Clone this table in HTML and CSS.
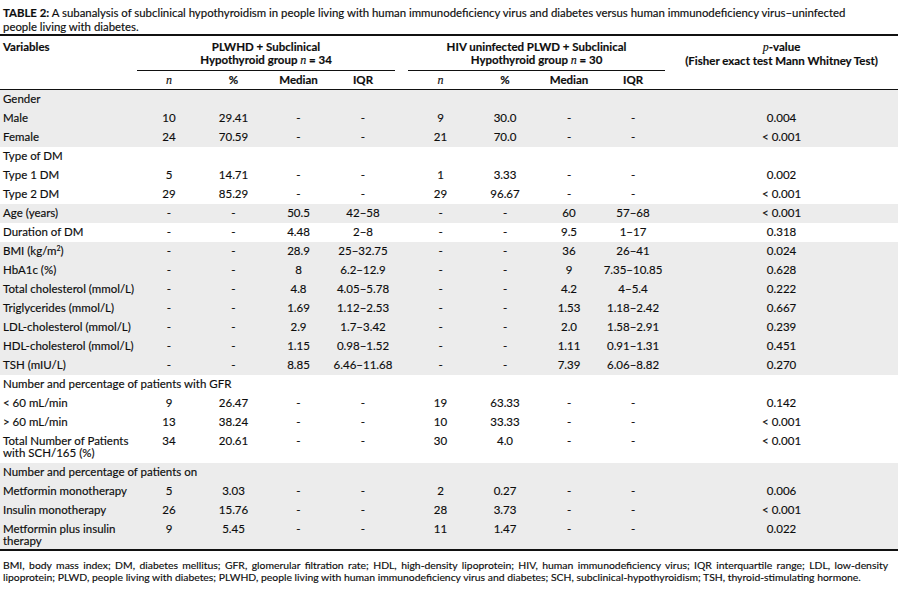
FILE: index.html
```html
<!DOCTYPE html>
<html>
<head>
<meta charset="utf-8">
<link rel="stylesheet" href="styles.css">
</head>
<body>
<div class="page">
  <p class="title"><b>TABLE 2:</b> A subanalysis of subclinical hypothyroidism in people living with human immunodeficiency virus and diabetes versus human immunodeficiency virus–uninfected<br>people living with diabetes.</p>
  <table class="tbl">
    <colgroup>
      <col style="width:137px"><col style="width:64px"><col style="width:65px"><col style="width:65px"><col style="width:64px">
      <col style="width:13px">
      <col style="width:65px"><col style="width:64px"><col style="width:64px"><col style="width:64px">
      <col style="width:233px">
    </colgroup>
    <thead>
      <tr class="h1">
        <th class="var">Variables</th>
        <th class="grp" colspan="4">PLWHD + Subclinical<br>Hypothyroid group <i class="it">n</i> = 34</th>
        <th class="sp"></th>
        <th class="grp" colspan="4">HIV uninfected PLWD + Subclinical<br>Hypothyroid group <i class="it">n</i> = 30</th>
        <th class="pv"><i class="it">p</i>-value<br>(Fisher exact test Mann Whitney Test)</th>
      </tr>
      <tr class="h2">
        <th></th>
        <th><i class="it">n</i></th><th>%</th><th>Median</th><th>IQR</th>
        <th></th>
        <th><i class="it">n</i></th><th>%</th><th>Median</th><th>IQR</th>
        <th></th>
      </tr>
    </thead>
    <tbody>
      <tr class="g"><td colspan="11">Gender</td></tr>
      <tr class="g"><td>Male</td><td>10</td><td>29.41</td><td>-</td><td>-</td><td></td><td>9</td><td>30.0</td><td>-</td><td>-</td><td>0.004</td></tr>
      <tr class="g"><td>Female</td><td>24</td><td>70.59</td><td>-</td><td>-</td><td></td><td>21</td><td>70.0</td><td>-</td><td>-</td><td>&lt; 0.001</td></tr>
      <tr><td colspan="11">Type of DM</td></tr>
      <tr><td>Type 1 DM</td><td>5</td><td>14.71</td><td>-</td><td>-</td><td></td><td>1</td><td>3.33</td><td>-</td><td>-</td><td>0.002</td></tr>
      <tr><td>Type 2 DM</td><td>29</td><td>85.29</td><td>-</td><td>-</td><td></td><td>29</td><td>96.67</td><td>-</td><td>-</td><td>&lt; 0.001</td></tr>
      <tr class="g"><td>Age (years)</td><td>-</td><td>-</td><td>50.5</td><td>42–58</td><td></td><td>-</td><td>-</td><td>60</td><td>57–68</td><td>&lt; 0.001</td></tr>
      <tr><td>Duration of DM</td><td>-</td><td>-</td><td>4.48</td><td>2–8</td><td></td><td>-</td><td>-</td><td>9.5</td><td>1–17</td><td>0.318</td></tr>
      <tr class="g"><td>BMI (kg/m<sup>2</sup>)</td><td>-</td><td>-</td><td>28.9</td><td>25–32.75</td><td></td><td>-</td><td>-</td><td>36</td><td>26–41</td><td>0.024</td></tr>
      <tr class="g"><td>HbA1c (%)</td><td>-</td><td>-</td><td>8</td><td>6.2–12.9</td><td></td><td>-</td><td>-</td><td>9</td><td>7.35–10.85</td><td>0.628</td></tr>
      <tr class="g"><td>Total cholesterol (mmol/L)</td><td>-</td><td>-</td><td>4.8</td><td>4.05–5.78</td><td></td><td>-</td><td>-</td><td>4.2</td><td>4–5.4</td><td>0.222</td></tr>
      <tr class="g"><td>Triglycerides (mmol/L)</td><td>-</td><td>-</td><td>1.69</td><td>1.12–2.53</td><td></td><td>-</td><td>-</td><td>1.53</td><td>1.18–2.42</td><td>0.667</td></tr>
      <tr class="g"><td>LDL-cholesterol (mmol/L)</td><td>-</td><td>-</td><td>2.9</td><td>1.7–3.42</td><td></td><td>-</td><td>-</td><td>2.0</td><td>1.58–2.91</td><td>0.239</td></tr>
      <tr class="g"><td>HDL-cholesterol (mmol/L)</td><td>-</td><td>-</td><td>1.15</td><td>0.98–1.52</td><td></td><td>-</td><td>-</td><td>1.11</td><td>0.91–1.31</td><td>0.451</td></tr>
      <tr class="g"><td>TSH (mIU/L)</td><td>-</td><td>-</td><td>8.85</td><td>6.46–11.68</td><td></td><td>-</td><td>-</td><td>7.39</td><td>6.06–8.82</td><td>0.270</td></tr>
      <tr><td colspan="11">Number and percentage of patients with GFR</td></tr>
      <tr><td>&lt; 60 mL/min</td><td>9</td><td>26.47</td><td>-</td><td>-</td><td></td><td>19</td><td>63.33</td><td>-</td><td>-</td><td>0.142</td></tr>
      <tr><td>&gt; 60 mL/min</td><td>13</td><td>38.24</td><td>-</td><td>-</td><td></td><td>10</td><td>33.33</td><td>-</td><td>-</td><td>&lt; 0.001</td></tr>
      <tr><td>Total Number of Patients with SCH/165 (%)</td><td>34</td><td>20.61</td><td>-</td><td>-</td><td></td><td>30</td><td>4.0</td><td>-</td><td>-</td><td>&lt; 0.001</td></tr>
      <tr class="g"><td colspan="11">Number and percentage of patients on</td></tr>
      <tr class="g"><td>Metformin monotherapy</td><td>5</td><td>3.03</td><td>-</td><td>-</td><td></td><td>2</td><td>0.27</td><td>-</td><td>-</td><td>0.006</td></tr>
      <tr class="g"><td>Insulin monotherapy</td><td>26</td><td>15.76</td><td>-</td><td>-</td><td></td><td>28</td><td>3.73</td><td>-</td><td>-</td><td>&lt; 0.001</td></tr>
      <tr class="g last"><td>Metformin plus insulin therapy</td><td>9</td><td>5.45</td><td>-</td><td>-</td><td></td><td>11</td><td>1.47</td><td>-</td><td>-</td><td>0.022</td></tr>
    </tbody>
  </table>
  <p class="foot"><span class="foot-l1">BMI, body mass index; DM, diabetes mellitus; GFR, glomerular filtration rate; HDL, high-density lipoprotein; HIV, human immunodeficiency virus; IQR interquartile range; LDL, low-density</span><span>lipoprotein; PLWD, people living with diabetes; PLWHD, people living with human immunodeficiency virus and diabetes; SCH, subclinical-hypothyroidism; TSH, thyroid-stimulating hormone.</span></p>
</div>
</body>
</html>
```

FILE: styles.css
```css
html, body {
  margin: 0;
  padding: 0;
  background: #ffffff;
}
.page {
  width: 898px;
  font-family: Lato, "Liberation Sans", sans-serif;
  color: #0d0d0d;
  -webkit-text-stroke: 0.15px #0d0d0d;
}
.title {
  margin: 0;
  padding: 6px 0 0 3px;
  font-size: 11.4px;
  line-height: 14px;
  height: 28px;
  white-space: nowrap;
}
.title b {
  font-weight: 700;
}
.tbl {
  width: 898px;
  table-layout: fixed;
  border-collapse: collapse;
  border-top: 2px solid #111;
  border-bottom: 2px solid #111;
  margin-top: 0;
  font-size: 11.5px;
}
.tbl th {
  font-weight: 700;
  text-align: center;
  vertical-align: top;
  padding: 0;
}
.it {
  font-family: "Liberation Serif", serif;
  font-style: italic;
  font-weight: 400;
  font-size: 12px;
}
.h1 th {
  padding-top: 4px;
  padding-bottom: 3px;
  line-height: 13px;
  height: 26px;
}
.h1 th.var {
  text-align: left;
  padding-left: 3px;
}
.h1 th.grp {
  border-bottom: 1px solid #111;
}
.h2 th {
  line-height: 12px;
  padding-top: 3px;
  padding-bottom: 3px;
  border-bottom: 1px solid #111;
}
.tbl td {
  padding: 3px 0 4px 0;
  line-height: 12px;
  text-align: center;
  vertical-align: top;
}
.tbl td:first-child {
  text-align: left;
  padding-left: 3px;
}
.tbl tr.g td {
  background: #ececec;
}
.tbl tr.last td {
  padding-bottom: 2px;
}
.tbl sup {
  font-size: 7px;
  line-height: 0;
  vertical-align: 4px;
}
.foot {
  margin: 0;
  padding: 8px 10px 0 3px;
  font-size: 10.4px;
  line-height: 12px;
}
.foot-l1 {
  display: block;
  text-align: justify;
  text-align-last: justify;
}
```
